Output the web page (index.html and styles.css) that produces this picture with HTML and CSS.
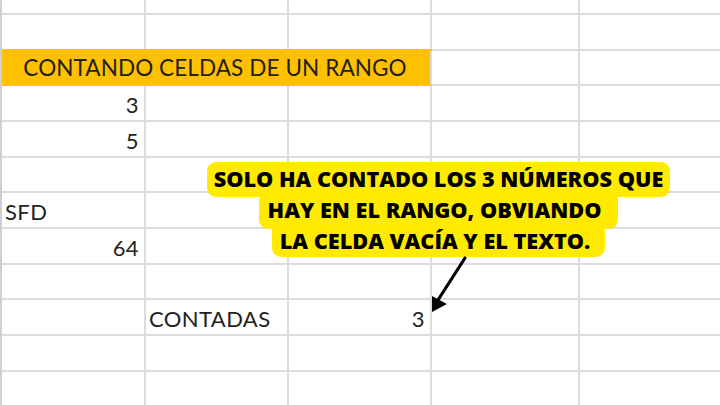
FILE: index.html
```html
<!DOCTYPE html>
<html lang="es">
<head>
    <meta charset="UTF-8">
    <title>Contar celdas</title>
    <link rel="stylesheet" href="styles.css">
</head>
<body>

<div class="sheet">
    <!-- fila parcial superior -->
    <div class="cell"></div><div class="cell"></div><div class="cell"></div><div class="cell"></div><div class="cell"></div>
    <div class="cell"></div><div class="cell"></div><div class="cell"></div><div class="cell"></div><div class="cell"></div>

    <div class="cell title">CONTANDO CELDAS DE UN RANGO</div><div class="cell"></div><div class="cell"></div>

    <div class="cell num">3</div><div class="cell"></div><div class="cell"></div><div class="cell"></div><div class="cell"></div>
    <div class="cell num">5</div><div class="cell"></div><div class="cell"></div><div class="cell"></div><div class="cell"></div>
    <div class="cell"></div><div class="cell"></div><div class="cell"></div><div class="cell"></div><div class="cell"></div>
    <div class="cell">SFD</div><div class="cell"></div><div class="cell"></div><div class="cell"></div><div class="cell"></div>
    <div class="cell num">64</div><div class="cell"></div><div class="cell"></div><div class="cell"></div><div class="cell"></div>
    <div class="cell"></div><div class="cell"></div><div class="cell"></div><div class="cell"></div><div class="cell"></div>
    <div class="cell"></div><div class="cell">CONTADAS</div><div class="cell num">3</div><div class="cell"></div><div class="cell"></div>
    <div class="cell"></div><div class="cell"></div><div class="cell"></div><div class="cell"></div><div class="cell"></div>
    <div class="cell"></div><div class="cell"></div><div class="cell"></div><div class="cell"></div><div class="cell"></div>
</div>

<div class="callout">
    <span class="line line-1">SOLO HA CONTADO LOS 3 NÚMEROS QUE</span>
    <span class="line line-2">HAY EN EL RANGO, OBVIANDO</span>
    <span class="line line-3">LA CELDA VACÍA Y EL TEXTO.</span>
</div>

<svg class="arrow" width="60" height="70" viewBox="0 0 60 70">
    <line x1="45" y1="8" x2="18" y2="50" stroke="#000" stroke-width="3.2" stroke-linecap="round"/>
    <polygon points="12,62 12,46 27,54" fill="#000"/>
</svg>

</body>
</html>
```

FILE: styles.css
```css
* {
    margin: 0;
    padding: 0;
    box-sizing: border-box;
}

body {
    width: 720px;
    height: 405px;
    overflow: hidden;
    background-color: #fff;
    position: relative;
    font-family: 'Lato', 'Open Sans', sans-serif;
    color: #222;
}

.sheet {
    display: grid;
    grid-template-columns: 144px 143px 143px 148px 142px;
    grid-template-rows: 15px repeat(11, 35.67px);
    border-left: 2px solid #cfcfcf;
}

.cell {
    border-right: 2px solid #dcdcdc;
    border-bottom: 2px solid #dcdcdc;
    display: flex;
    align-items: flex-end;
    padding: 0 5px 4px 3px;
    font-size: 22px;
    letter-spacing: 0.4px;
    line-height: 1;
    white-space: nowrap;
}

.num {
    justify-content: flex-end;
}

.title {
    grid-column: span 3;
    justify-content: center;
    background-color: #ffc000;
    border-bottom-color: #ffc000;
    box-shadow: 0 -2px 0 #ffc000;
    padding-bottom: 5px;
    font-size: 22.5px;
    letter-spacing: 0.1px;
}

/* cuadro de comentario amarillo */
.callout {
    position: absolute;
    left: 207px;
    top: 162px;
    width: 463px;
    display: flex;
    flex-direction: column;
    align-items: center;
    font-family: 'Open Sans', sans-serif;
    font-weight: 800;
    font-size: 21.7px;
    color: #000;
}

.line {
    display: block;
    background-color: #ffea00;
    border-radius: 9px;
    white-space: nowrap;
}

.line-1 {
    height: 35px;
    padding: 2px 7px 0 7px;
}

.line-2 {
    height: 38px;
    margin-top: -6px;
    padding: 4px 17px 0 9px;
}

.line-3 {
    height: 34px;
    margin-top: -6px;
    padding: 3px 15px 0 8px;
}

.arrow {
    position: absolute;
    left: 420px;
    top: 250px;
}
```
